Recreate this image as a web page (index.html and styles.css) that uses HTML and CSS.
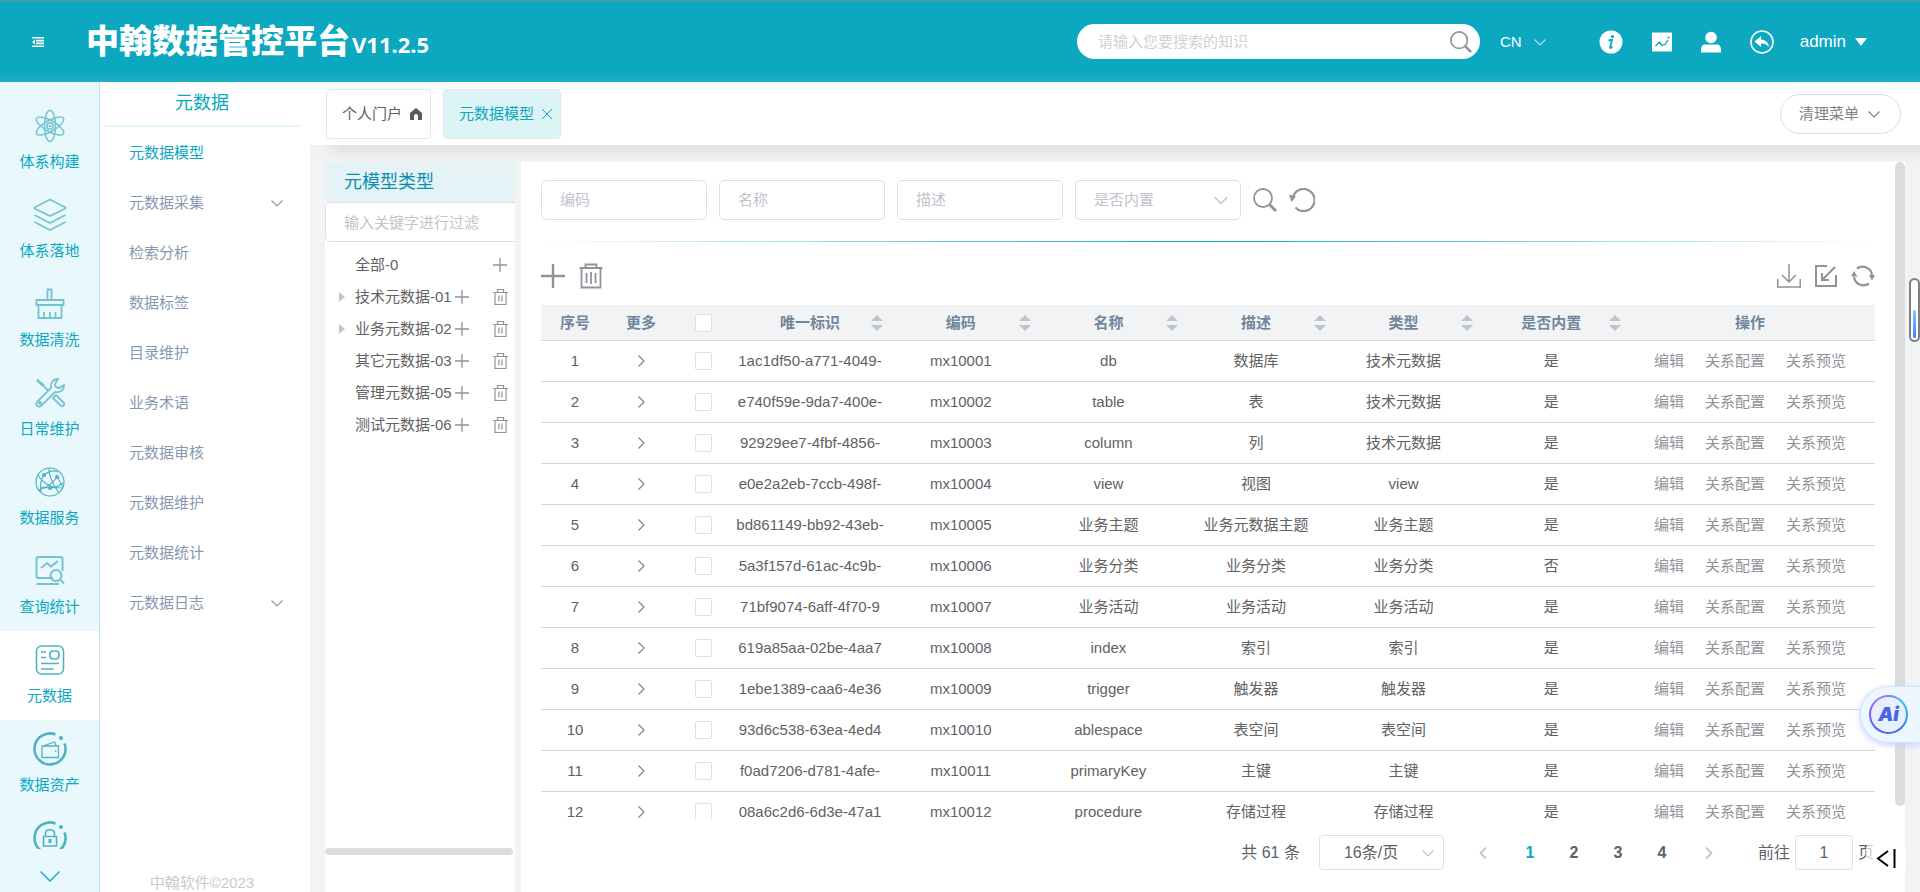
FILE: index.html
```html
<!DOCTYPE html>
<html lang="zh-CN">
<head>
<meta charset="utf-8">
<title>中翰数据管控平台</title>
<link rel="stylesheet" href="styles.css">
</head>
<body>
<svg class="sprite" aria-hidden="true">
  <symbol id="down" viewBox="0 0 12 12"><path d="M0.5 3.5 6 9l5.500-5.500" fill="none" stroke="currentColor" stroke-width="1.200"/></symbol>
  <symbol id="right" viewBox="0 0 12 12"><path d="M3.500 0.500 9 6 3.500 11.500" fill="none" stroke="currentColor" stroke-width="1.200"/></symbol>
  <symbol id="plus" viewBox="0 0 16 16"><path d="M8 1v14M1 8h14" fill="none" stroke="currentColor" stroke-width="1.300"/></symbol>
  <symbol id="trash" viewBox="0 0 24 26"><path d="M.5 5h23M6.500 5V1.500h11V5M2.500 5v19.500h19V5M7.500 10v10M12 9v12M16.500 10v10" fill="none" stroke="currentColor" stroke-width="1.800"/></symbol>
  <symbol id="trash-s" viewBox="0 0 15 16"><path d="M0 3.500h15M4.500 3V.5h6V3M2 3.500v12h11v-12M6 6.500v6M9 6.500v6" fill="none" stroke="currentColor" stroke-width="1.200"/></symbol>
  <symbol id="search" viewBox="0 0 24 24"><circle cx="10" cy="10" r="9" fill="none" stroke="currentColor" stroke-width="1.800"/><path d="m16.500 16.500 6.500 6.500" stroke="currentColor" stroke-width="2.800"/></symbol>
  <symbol id="sort" viewBox="0 0 12 16"><path d="M6 0l6 6H0zM0 10h12l-6 6z" fill="currentColor"/></symbol>
</svg>

<header class="topbar">
  <button class="icon-btn fold" aria-label="折叠菜单"><svg width="12" height="10" viewBox="0 0 12 10"><path d="M0 .75h12M4 3.600h8M4 6.400h8M0 9.250h12" stroke="#fff" stroke-width="1.700"/><path d="M0 5l3-2.500v5z" fill="#fff"/></svg></button>
  <h1 class="brand">中翰数据管控平台<span class="version">V11.2.5</span></h1>
  <form class="global-search">
    <input type="text" aria-label="搜索知识" placeholder="请输入您要搜索的知识">
    <button type="button" class="icon-btn" aria-label="搜索"><svg width="22" height="22"><use href="#search"/></svg></button>
  </form>
  <button class="lang">CN <svg width="14" height="12"><use href="#down"/></svg></button>
  <nav class="tools">
    <button class="icon-btn" aria-label="信息"><svg width="24" height="24" viewBox="0 0 24 24"><circle cx="12" cy="12" r="11.500" fill="#fff"/><circle cx="13.500" cy="6.500" r="1.600" fill="#0ba8bf"/><path d="M9.500 10.500l3.500-.8-1.800 7.500c-.3 1.300.8 1 2.300-.5" fill="none" stroke="#0ba8bf" stroke-width="1.800"/></svg></button>
    <button class="icon-btn" aria-label="图表"><svg width="20" height="20" viewBox="0 0 20 20"><path d="M0 .5h20v19H0z" fill="#fff"/><path d="M3.500 14l4-4 2.500 3.500 3-1 3-4.500" fill="none" stroke="#0ba8bf" stroke-width="1.300"/><circle cx="16.500" cy="5.500" r="1" fill="#0ba8bf"/></svg></button>
    <button class="icon-btn" aria-label="用户"><svg width="20" height="22" viewBox="0 0 20 22"><circle cx="10" cy="6.500" r="5.800" fill="#fff"/><path d="M0 21.500v-3c0-3 1.500-5 4-5h12c2.500 0 4 2 4 5v3z" fill="#fff"/></svg></button>
    <button class="icon-btn" aria-label="返回"><svg width="24" height="24" viewBox="0 0 24 24"><circle cx="12" cy="12" r="11" fill="none" stroke="#fff" stroke-width="1.600"/><path d="M4.500 11.500 11 6v3.500c5 .5 7.500 3 8 7.500-2-2.500-4.500-3.500-8-3.500V17z" fill="#fff"/></svg></button>
  </nav>
  <button class="account">admin <svg width="12" height="8" viewBox="0 0 12 8"><path d="M0 0h12L6 8z" fill="#fff"/></svg></button>
</header>

<div class="shell">
  <nav class="rail">
    <ul class="rail-list">
      <li><a href="#" class="rail-item"><svg width="34" height="34" viewBox="0 0 34 34"><g fill="none" stroke="currentColor" stroke-width="1.500"><ellipse cx="17" cy="17" rx="5.500" ry="15.500"/><ellipse cx="17" cy="17" rx="5.500" ry="15.500" transform="rotate(60 17 17)"/><ellipse cx="17" cy="17" rx="5.500" ry="15.500" transform="rotate(120 17 17)"/><circle cx="17" cy="17" r="3.200"/></g><circle cx="17" cy="17" r="1.300" fill="currentColor"/></svg>体系构建</a></li>
      <li><a href="#" class="rail-item"><svg width="34" height="34" viewBox="0 0 34 34"><path d="M17 1.500 32.500 9.500v1L17 18 1.500 10.500v-1zM1.500 17 17 25l15.500-8M1.500 24 17 32l15.500-8" fill="none" stroke="currentColor" stroke-width="1.700"/></svg>体系落地</a></li>
      <li><a href="#" class="rail-item"><svg width="34" height="34" viewBox="0 0 34 34"><path d="M14.500 13V2.500h4V13M3.500 13h27v5h-27zM5.500 18v13h23V18M11 31v-6M17 31v-6M22.500 31v-6" fill="none" stroke="currentColor" stroke-width="1.800"/></svg>数据清洗</a></li>
      <li><a href="#" class="rail-item"><svg width="34" height="34" viewBox="0 0 34 34"><g fill="none" stroke="currentColor" stroke-width="1.800"><path d="M4 26 18 12c-1-5 2-9 7-9l-3 5c0 3 2 4 4 4l5-3c0 5-4 8-9 7L8 30c-3 2-6-1-4-4z"/><path d="m20 22 8 8c2 1 4-1 3-3l-8-8z"/><circle cx="7" cy="27" r="1"/></g><path d="M3 4.500 5 3l6 5 1 2 4 4-1.500 1.500-4-4.500-2-1z" fill="currentColor"/></svg>日常维护</a></li>
      <li><a href="#" class="rail-item strong"><svg width="34" height="34" viewBox="0 0 34 34"><g fill="none" stroke="currentColor" stroke-width="1.200"><circle cx="17" cy="17" r="14"/><path d="M5 10c6 10 14 13 24 13M11 10c5-4 10-5 14-3M24 12C20 18 13 23 6 25M11 10C7 16 7 22 8 27M16 3c0 9 4 17 10 25M24 12c3 4 5 8 6 10M17 23l-9-1M17 23c5 0 9-2 13-5"/></g><circle cx="11" cy="10" r="2" fill="currentColor"/><circle cx="24" cy="12" r="2" fill="currentColor"/><circle cx="17" cy="23" r="2" fill="currentColor"/></svg>数据服务</a></li>
      <li><a href="#" class="rail-item"><svg width="34" height="34" viewBox="0 0 34 34"><g fill="none" stroke="currentColor" stroke-width="2"><path d="M20 24H5.500c-1 0-2-1-2-2V5c0-1 1-2 2-2h22c1 0 2 1 2 2v12M3.500 30H26"/><path d="m8 14 6-5 4 3.500 7-5.500"/><circle cx="23" cy="21.500" r="5.500"/><path d="m27 25.500 4 4"/></g></svg>查询统计</a></li>
      <li><a href="#" class="rail-item active"><svg width="34" height="34" viewBox="0 0 34 34"><g fill="none" stroke="currentColor" stroke-width="1.600"><rect x="3.500" y="3" width="27" height="28" rx="5"/><rect x="17" y="8" width="9" height="8" rx="3"/><path d="M8 9h5M8 14.500h5M8 20.500h18M8 26h12.500"/></g></svg>元数据</a></li>
      <li><a href="#" class="rail-item strong"><svg width="34" height="34" viewBox="0 0 34 34"><g fill="none" stroke="currentColor"><path d="M22.500 2.500A15.500 15.500 0 1 0 31.500 11.500" stroke-width="2.600"/><path d="M9 14h16.500v11.500H9zM10 14l11.500-4 1.500 3.500M22 19h1.500" stroke-width="1.300"/></g><circle cx="28" cy="6" r="2" fill="currentColor"/></svg>数据资产</a></li>
      <li><a href="#" class="rail-item strong" aria-label="数据安全"><svg width="34" height="34" viewBox="0 0 34 34"><g fill="none" stroke="currentColor"><path d="M22.500 2.500A15.500 15.500 0 1 0 31.500 11.500" stroke-width="2.600"/><path d="M10.500 15.500h13v9.500h-13zM12.500 15v-2.500c0-5 9-5 9 0V15" stroke-width="1.600"/></g><path d="M15.500 18h3v4h-3z" fill="currentColor"/><circle cx="28" cy="6" r="2" fill="currentColor"/></svg></a></li>
    </ul>
    <button class="icon-btn rail-more" aria-label="更多菜单"><svg width="20" height="11" viewBox="0 0 20 11"><path d="m.5.500 9.500 9.500 9.500-9.500" fill="none" stroke="currentColor" stroke-width="1.300"/></svg></button>
  </nav>

  <aside class="submenu">
    <h2 class="submenu-title">元数据</h2>
    <ul class="submenu-list">
      <li><a href="#" class="sub-item current">元数据模型</a></li>
      <li><a href="#" class="sub-item">元数据采集<svg width="12" height="12"><use href="#down"/></svg></a></li>
      <li><a href="#" class="sub-item">检索分析</a></li>
      <li><a href="#" class="sub-item">数据标签</a></li>
      <li><a href="#" class="sub-item">目录维护</a></li>
      <li><a href="#" class="sub-item">业务术语</a></li>
      <li><a href="#" class="sub-item">元数据审核</a></li>
      <li><a href="#" class="sub-item">元数据维护</a></li>
      <li><a href="#" class="sub-item">元数据统计</a></li>
      <li><a href="#" class="sub-item">元数据日志<svg width="12" height="12"><use href="#down"/></svg></a></li>
    </ul>
    <p class="copyright">中翰软件©2023</p>
  </aside>

  <main class="main">
    <div class="tabs">
      <button class="tab">个人门户 <svg width="12" height="12" viewBox="0 0 12 12"><path d="M6 0 12 5v7H8V8a2 2 0 0 0-4 0v4H0V5z" fill="#5a5c60"/></svg></button>
      <button class="tab selected">元数据模型 <svg width="10" height="10" viewBox="0 0 10 10"><path d="m0 0 10 10M10 0 0 10" stroke="currentColor"/></svg></button>
      <button class="clear">清理菜单 <svg width="12" height="12"><use href="#down"/></svg></button>
    </div>

    <div class="work">
      <section class="tree">
        <h3 class="tree-title">元模型类型</h3>
        <input class="tree-filter" type="text" aria-label="过滤" placeholder="输入关键字进行过滤">
        <ul class="tree-list">
          <li class="node"><span class="caret"></span>全部-0<button class="icon-btn last" aria-label="新增"><svg width="16" height="16"><use href="#plus"/></svg></button></li>
          <li class="node"><span class="caret open"></span>技术元数据-01<button class="icon-btn add" aria-label="新增"><svg width="16" height="16"><use href="#plus"/></svg></button><button class="icon-btn last" aria-label="删除"><svg width="15" height="16"><use href="#trash-s"/></svg></button></li>
          <li class="node"><span class="caret open"></span>业务元数据-02<button class="icon-btn add" aria-label="新增"><svg width="16" height="16"><use href="#plus"/></svg></button><button class="icon-btn last" aria-label="删除"><svg width="15" height="16"><use href="#trash-s"/></svg></button></li>
          <li class="node"><span class="caret"></span>其它元数据-03<button class="icon-btn add" aria-label="新增"><svg width="16" height="16"><use href="#plus"/></svg></button><button class="icon-btn last" aria-label="删除"><svg width="15" height="16"><use href="#trash-s"/></svg></button></li>
          <li class="node"><span class="caret"></span>管理元数据-05<button class="icon-btn add" aria-label="新增"><svg width="16" height="16"><use href="#plus"/></svg></button><button class="icon-btn last" aria-label="删除"><svg width="15" height="16"><use href="#trash-s"/></svg></button></li>
          <li class="node"><span class="caret"></span>测试元数据-06<button class="icon-btn add" aria-label="新增"><svg width="16" height="16"><use href="#plus"/></svg></button><button class="icon-btn last" aria-label="删除"><svg width="15" height="16"><use href="#trash-s"/></svg></button></li>
        </ul>
        <div class="tree-scroll"></div>
      </section>

      <section class="panel">
        <div class="content">
          <form class="filters">
            <input class="field" type="text" aria-label="编码" placeholder="编码">
            <input class="field" type="text" aria-label="名称" placeholder="名称">
            <input class="field" type="text" aria-label="描述" placeholder="描述">
            <div class="select-wrap"><select class="field" aria-label="是否内置"><option>是否内置</option></select><svg class="chev" width="14" height="14"><use href="#down"/></svg></div>
            <button type="button" class="icon-btn" aria-label="查询"><svg width="24" height="24"><use href="#search"/></svg></button>
            <button type="button" class="icon-btn" aria-label="重置"><svg width="26" height="24" viewBox="0 0 26 24"><path d="M4 9A11 11 0 1 1 6.500 19.500" fill="none" stroke="currentColor" stroke-width="2.200"/><path d="m0 6.500 7 2-4.500 5.500z" fill="currentColor"/></svg></button>
          </form>
          <div class="actions">
            <button class="icon-btn" aria-label="新增"><svg width="24" height="24" viewBox="0 0 24 24"><path d="M12 0v24M0 12h24" stroke="currentColor" stroke-width="2.400"/></svg></button>
            <button class="icon-btn" aria-label="删除"><svg width="24" height="26"><use href="#trash"/></svg></button>
            <span class="spacer"></span>
            <button class="icon-btn" aria-label="下载"><svg width="24" height="24" viewBox="0 0 24 24"><path d="M12 0v18M5 11l7 7 7-7M.75 15v8h22.500v-8" fill="none" stroke="currentColor" stroke-width="1.500"/></svg></button>
            <button class="icon-btn" aria-label="导入"><svg width="22" height="22" viewBox="0 0 22 22"><path d="M12 1H1v20h20V10M20 2 7.500 14.500M7 8v7h7" fill="none" stroke="currentColor" stroke-width="2"/></svg></button>
            <button class="icon-btn" aria-label="刷新"><svg width="24" height="22" viewBox="0 0 24 22"><path d="M6 3.500A9.500 9.500 0 0 1 21 10M18 18.500A9.500 9.500 0 0 1 3 12" fill="none" stroke="currentColor" stroke-width="2.200"/><path d="M3 6 6.500 11.500H0zM21 15.500l-3-5.500h6z" fill="currentColor"/></svg></button>
          </div>
          <div class="table-wrap">
            <table class="grid">
              <colgroup><col class="c-no"><col class="c-more"><col class="c-check"><col class="c-id"><col><col><col><col><col><col class="c-ops"></colgroup>
              <thead><tr>
                <th>序号</th><th>更多</th><th><input type="checkbox" aria-label="全选"></th>
                <th><div class="sortable">唯一标识<svg width="12" height="16"><use href="#sort"/></svg></div></th>
                <th><div class="sortable">编码<svg width="12" height="16"><use href="#sort"/></svg></div></th>
                <th><div class="sortable">名称<svg width="12" height="16"><use href="#sort"/></svg></div></th>
                <th><div class="sortable">描述<svg width="12" height="16"><use href="#sort"/></svg></div></th>
                <th><div class="sortable">类型<svg width="12" height="16"><use href="#sort"/></svg></div></th>
                <th><div class="sortable">是否内置<svg width="12" height="16"><use href="#sort"/></svg></div></th>
                <th>操作</th>
              </tr></thead>
              <tbody>
                <tr><td>1</td><td><svg class="more" width="12" height="12"><use href="#right"/></svg></td><td><input type="checkbox" aria-label="选择1"></td><td>1ac1df50-a771-4049-</td><td>mx10001</td><td>db</td><td>数据库</td><td>技术元数据</td><td>是</td><td><div class="ops"><a href="#">编辑</a><a href="#">关系配置</a><a href="#">关系预览</a></div></td></tr>
                <tr><td>2</td><td><svg class="more" width="12" height="12"><use href="#right"/></svg></td><td><input type="checkbox" aria-label="选择2"></td><td>e740f59e-9da7-400e-</td><td>mx10002</td><td>table</td><td>表</td><td>技术元数据</td><td>是</td><td><div class="ops"><a href="#">编辑</a><a href="#">关系配置</a><a href="#">关系预览</a></div></td></tr>
                <tr><td>3</td><td><svg class="more" width="12" height="12"><use href="#right"/></svg></td><td><input type="checkbox" aria-label="选择3"></td><td>92929ee7-4fbf-4856-</td><td>mx10003</td><td>column</td><td>列</td><td>技术元数据</td><td>是</td><td><div class="ops"><a href="#">编辑</a><a href="#">关系配置</a><a href="#">关系预览</a></div></td></tr>
                <tr><td>4</td><td><svg class="more" width="12" height="12"><use href="#right"/></svg></td><td><input type="checkbox" aria-label="选择4"></td><td>e0e2a2eb-7ccb-498f-</td><td>mx10004</td><td>view</td><td>视图</td><td>view</td><td>是</td><td><div class="ops"><a href="#">编辑</a><a href="#">关系配置</a><a href="#">关系预览</a></div></td></tr>
                <tr><td>5</td><td><svg class="more" width="12" height="12"><use href="#right"/></svg></td><td><input type="checkbox" aria-label="选择5"></td><td>bd861149-bb92-43eb-</td><td>mx10005</td><td>业务主题</td><td>业务元数据主题</td><td>业务主题</td><td>是</td><td><div class="ops"><a href="#">编辑</a><a href="#">关系配置</a><a href="#">关系预览</a></div></td></tr>
                <tr><td>6</td><td><svg class="more" width="12" height="12"><use href="#right"/></svg></td><td><input type="checkbox" aria-label="选择6"></td><td>5a3f157d-61ac-4c9b-</td><td>mx10006</td><td>业务分类</td><td>业务分类</td><td>业务分类</td><td>否</td><td><div class="ops"><a href="#">编辑</a><a href="#">关系配置</a><a href="#">关系预览</a></div></td></tr>
                <tr><td>7</td><td><svg class="more" width="12" height="12"><use href="#right"/></svg></td><td><input type="checkbox" aria-label="选择7"></td><td>71bf9074-6aff-4f70-9</td><td>mx10007</td><td>业务活动</td><td>业务活动</td><td>业务活动</td><td>是</td><td><div class="ops"><a href="#">编辑</a><a href="#">关系配置</a><a href="#">关系预览</a></div></td></tr>
                <tr><td>8</td><td><svg class="more" width="12" height="12"><use href="#right"/></svg></td><td><input type="checkbox" aria-label="选择8"></td><td>619a85aa-02be-4aa7</td><td>mx10008</td><td>index</td><td>索引</td><td>索引</td><td>是</td><td><div class="ops"><a href="#">编辑</a><a href="#">关系配置</a><a href="#">关系预览</a></div></td></tr>
                <tr><td>9</td><td><svg class="more" width="12" height="12"><use href="#right"/></svg></td><td><input type="checkbox" aria-label="选择9"></td><td>1ebe1389-caa6-4e36</td><td>mx10009</td><td>trigger</td><td>触发器</td><td>触发器</td><td>是</td><td><div class="ops"><a href="#">编辑</a><a href="#">关系配置</a><a href="#">关系预览</a></div></td></tr>
                <tr><td>10</td><td><svg class="more" width="12" height="12"><use href="#right"/></svg></td><td><input type="checkbox" aria-label="选择10"></td><td>93d6c538-63ea-4ed4</td><td>mx10010</td><td>ablespace</td><td>表空间</td><td>表空间</td><td>是</td><td><div class="ops"><a href="#">编辑</a><a href="#">关系配置</a><a href="#">关系预览</a></div></td></tr>
                <tr><td>11</td><td><svg class="more" width="12" height="12"><use href="#right"/></svg></td><td><input type="checkbox" aria-label="选择11"></td><td>f0ad7206-d781-4afe-</td><td>mx10011</td><td>primaryKey</td><td>主键</td><td>主键</td><td>是</td><td><div class="ops"><a href="#">编辑</a><a href="#">关系配置</a><a href="#">关系预览</a></div></td></tr>
                <tr><td>12</td><td><svg class="more" width="12" height="12"><use href="#right"/></svg></td><td><input type="checkbox" aria-label="选择12"></td><td>08a6c2d6-6d3e-47a1</td><td>mx10012</td><td>procedure</td><td>存储过程</td><td>存储过程</td><td>是</td><td><div class="ops"><a href="#">编辑</a><a href="#">关系配置</a><a href="#">关系预览</a></div></td></tr>
              </tbody>
            </table>
          </div>
          <div class="pager">
            <span>共 61 条</span>
            <div class="select-wrap size-wrap"><select class="size" aria-label="每页条数"><option>16条/页</option></select><svg class="chev" width="12" height="12"><use href="#down"/></svg></div>
            <button class="page arrow" aria-label="上一页"><svg width="8" height="12" viewBox="0 0 8 12"><path d="M7 .5 1.500 6 7 11.500" fill="none" stroke="currentColor" stroke-width="1.800"/></svg></button>
            <button class="page on">1</button>
            <button class="page">2</button>
            <button class="page">3</button>
            <button class="page">4</button>
            <button class="page arrow" aria-label="下一页"><svg width="8" height="12" viewBox="0 0 8 12"><path d="M1 .5 6.500 6 1 11.500" fill="none" stroke="currentColor" stroke-width="1.800"/></svg></button>
            <label class="jump">前往<input type="text" value="1">页</label>
          </div>
        </div>
        <div class="scroll-track"><div class="scroll-thumb"></div></div>
      </section>
    </div>
  </main>
</div>

<div class="gauge"><div class="gauge-fill"></div></div>
<button class="ai" aria-label="AI 助手"><span class="ai-ring"><span class="ai-text">Ai</span></span></button>
<button class="collapse" aria-label="收起"><svg width="20" height="19" viewBox="0 0 20 19"><path d="M12 2 2 9.500 12 17M18.500 0v19" fill="none" stroke="#000" stroke-width="2"/></svg></button>
</body>
</html>
```

FILE: styles.css
```css
* { box-sizing: border-box; }
body {
  margin: 0;
  height: 100vh;
  display: flex;
  flex-direction: column;
  overflow: hidden;
  position: relative;
  background: #f2f3f5;
  color: #606266;
  font: 15px/20px "Liberation Sans", "Noto Sans CJK SC", sans-serif;
}
h1, h2, h3, p, ul { margin: 0; padding: 0; font-weight: 400; }
ul { list-style: none; }
a { color: inherit; text-decoration: none; }
button, input, select { font: inherit; color: inherit; }
button { background: none; border: 0; padding: 0; cursor: pointer; }
svg { flex: none; display: block; }
.sprite { position: absolute; width: 0; height: 0; }
.icon-btn { display: flex; align-items: center; justify-content: center; color: #909399; }
input::placeholder { color: #c0c4cc; opacity: 1; }

/* top bar */
.topbar {
  flex: none;
  display: flex;
  align-items: center;
  height: 82px;
  padding: 0 53px 0 32px;
  border-top: 1px solid #6e8a92;
  background: linear-gradient(#0ba8bf 88%, #20aec3);
  color: #fff;
}
.brand {
  margin-left: 42px;
  font-size: 33px;
  line-height: 40px;
  font-weight: 900;
  font-family: "Noto Sans CJK SC", sans-serif;
  white-space: nowrap;
}
.version { margin-left: 2px; font-size: 22px; font-weight: 700; font-family: "Noto Sans", sans-serif; }
.global-search {
  display: flex;
  align-items: center;
  width: 403px;
  height: 35px;
  margin-left: auto;
  padding: 0 8px 0 21px;
  border-radius: 18px;
  background: #fff;
}
.global-search input { flex: 1; min-width: 0; border: 0; padding: 0; outline: 0; background: none; }
.global-search input::placeholder { color: #d0d2d6; }
.lang { display: flex; align-items: center; gap: 11px; margin-left: 20px; }
.lang svg { color: #a8dfe8; }
.tools { display: flex; align-items: center; gap: 29px; margin-left: 52px; }
.account { display: flex; align-items: center; gap: 9px; margin-left: 26px; font-size: 17px; }

.shell { flex: 1; min-height: 0; display: flex; }

/* icon rail */
.rail {
  flex: none;
  display: flex;
  flex-direction: column;
  width: 100px;
  padding-top: 15px;
  background: #e8f8fc;
  border-right: 1px solid #c3e8ee;
}
.rail-list { flex: 1; min-height: 0; overflow: hidden; }
.rail-item {
  display: flex;
  flex-direction: column;
  align-items: center;
  gap: 9px;
  height: 89px;
  padding: 12px 0;
  color: #0ba8bf;
}
.rail-item svg { color: #74c3cf; }
.rail-item.strong svg, .rail-item.active svg { color: #4fb3c1; }
.rail-item.active { background: #fff; }
.rail-more { height: 43px; padding-top: 12px; color: #0ba8bf; }

/* sub menu */
.submenu { flex: none; display: flex; flex-direction: column; width: 210px; padding: 0 10px 0 4px; background: #fff; }
.submenu-title {
  height: 45px;
  border-bottom: 2px solid #e4f7fa;
  color: #0ba8bf;
  font-size: 18px;
  line-height: 42px;
  text-align: center;
}
.submenu-list { flex: 1; min-height: 0; }
.sub-item {
  display: flex;
  align-items: center;
  justify-content: space-between;
  height: 50px;
  padding: 1px 17px 0 25px;
  color: #8799b0;
}
.sub-item.current { color: #0ba8bf; }
.copyright { height: 19px; color: #c8cacd; text-align: center; }

/* main */
.main { flex: 1; min-width: 0; display: flex; flex-direction: column; }
.tabs { flex: none; display: flex; align-items: center; gap: 12px; height: 63px; padding: 0 19px 0 16px; background: #fff; }
.tab {
  display: flex;
  align-items: center;
  gap: 8px;
  height: 50px;
  padding: 0 8px 0 15px;
  border: 1px solid #e4e7ec;
  border-radius: 4px;
}
.tab.selected { background: #dcf4f6; color: #0ba8bf; }
.clear {
  display: flex;
  align-items: center;
  gap: 9px;
  height: 40px;
  margin-left: auto;
  padding: 0 20px 0 18px;
  border: 1px solid #dcdfe6;
  border-radius: 20px;
  color: #808286;
}
.work {
  flex: 1;
  min-height: 0;
  display: flex;
  gap: 6px;
  padding: 17px 15px 0;
  background: linear-gradient(90deg, #f2f3f5 8px, rgba(242, 243, 245, 0) 32px), linear-gradient(#dfe0e0, #f2f3f5 17px);
}

/* type tree */
.tree { flex: none; display: flex; flex-direction: column; width: 190px; overflow: hidden; background: #fff; }
.tree-title { height: 40px; padding-left: 19px; background: #e5f2f6; color: #0b8fb0; font-size: 18px; line-height: 40px; }
.tree-filter { flex: none; width: 220px; height: 40px; padding: 0 18px; border: 1px solid #dcdfe6; border-radius: 5px; }
.tree-list { flex: 1; min-height: 0; display: grid; grid-auto-rows: 32px; align-content: start; padding: 7px 7px 0 14px; }
.node { display: flex; align-items: center; white-space: nowrap; }
.node .add { margin-left: 2px; }
.node .last { margin-left: auto; }
.caret { width: 6px; margin-right: 10px; }
.caret.open { border-left: 6px solid #c0c4cc; border-top: 5px solid transparent; border-bottom: 5px solid transparent; }
.tree-scroll { flex: none; height: 7px; margin: 0 2px 37px 0; border-radius: 4px; background: #dcdcdc; }

/* content panel */
.panel { flex: 1; min-width: 0; display: flex; background: #fff; }
.content { flex: 1; min-width: 0; display: flex; flex-direction: column; padding: 18px 20px 0; }
.filters { flex: none; display: flex; align-items: center; gap: 12px; height: 62px; padding-bottom: 22px; border-bottom: 1px solid; border-image: linear-gradient(90deg, #fff, #0ba8bf, #fff) 1; }
.field { width: 166px; height: 40px; padding: 0 18px; border: 1px solid #dcdfe6; border-radius: 5px; background: #fff; }
.select-wrap { position: relative; }
.select-wrap select { appearance: none; }
select.field { color: #c0c4cc; }
.chev { position: absolute; right: 13px; top: 13px; color: #c0c4cc; pointer-events: none; }
.actions { flex: none; display: flex; align-items: center; gap: 14px; height: 63px; padding-top: 4px; }
.actions .spacer { flex: 1; }

.table-wrap { flex: 1; min-height: 0; overflow: hidden; }
.grid { width: 100%; border-collapse: separate; border-spacing: 0; table-layout: fixed; }
.c-no { width: 68px; }
.c-more { width: 64px; }
.c-check { width: 60px; }
.c-id { width: 154px; }
.c-ops { width: 250px; }
.grid th { height: 36px; padding: 0; background: #f2f3f5; border-bottom: 1px solid #d4d5d9; color: #71869d; font-weight: 700; }
.grid td { height: 41px; padding: 0; border-bottom: 1px solid #d4d5d9; text-align: center; white-space: nowrap; }
.sortable { display: grid; grid-template-columns: 1fr auto 1fr; }
.sortable::before { content: ""; }
.sortable svg { justify-self: end; align-self: center; margin-right: 4px; color: #c0c4cc; }
.more { margin: 0 auto; color: #808286; }
.grid input { appearance: none; display: block; width: 17px; height: 18px; margin: 0 auto; border: 1px solid #dcdfe6; border-radius: 2px; background: #fff; }
.ops { display: flex; justify-content: center; gap: 21px; color: #909399; }

/* pagination */
.pager { flex: none; display: flex; align-items: center; justify-content: flex-end; height: 73px; padding: 0 1px 6px 0; font-size: 16px; }
.size-wrap { margin: 0 14px 0 19px; }
.size { width: 125px; height: 35px; padding: 0 24px; border: 1px solid #dcdfe6; border-radius: 4px; background: #fff; }
.size-wrap .chev { right: 10px; top: 12px; }
.page { display: flex; align-items: center; justify-content: center; width: 44px; font-weight: 700; }
.page.on { color: #0ba8bf; }
.page.arrow { color: #c0c4cc; width: 50px; }
.jump { display: flex; align-items: center; gap: 5px; margin-left: 24px; }
.jump input { width: 58px; height: 35px; padding: 0; border: 1px solid #dcdfe6; border-radius: 4px; text-align: center; }
.scroll-track { flex: none; width: 10px; padding-bottom: 86px; }
.scroll-thumb { height: 100%; border-radius: 5px; background: #dcdcdc; }

/* floating widgets */
.gauge { position: absolute; right: 0; top: 278px; display: flex; align-items: flex-end; width: 11px; height: 64px; padding: 2px; border: 2px solid #7d7f83; border-radius: 6px; background: #fff; }
.gauge-fill { width: 100%; height: 28px; border-radius: 2px; background: linear-gradient(#7cc8ff, #3d82ff); }
.ai {
  position: absolute;
  right: 0;
  bottom: 149px;
  width: 60px;
  height: 57px;
  padding-left: 8px;
  border: 1px solid #cfe4fb;
  border-right: 0;
  border-radius: 28px 0 0 28px;
  background: #eef6ff;
  box-shadow: 0 2px 6px #c5d2ff;
}
.ai-ring {
  display: flex;
  align-items: center;
  justify-content: center;
  width: 39px;
  height: 39px;
  border: 2px solid transparent;
  border-radius: 50%;
  background: linear-gradient(#e9effd, #e9effd) padding-box, conic-gradient(#8a7cf0, #2cc8f0 15%, #3f7cf0 35%, #4a62f0 55%, #7a5cf5 75%, #a080f5 90%, #8a7cf0) border-box;
}
.ai-text { color: #4a62e8; font: italic 900 19px/20px Inter, sans-serif; }
.collapse { position: absolute; right: 14px; bottom: 14px; display: flex; align-items: center; justify-content: center; width: 40px; height: 40px; border-radius: 12px; background: rgba(255, 255, 255, 0.7); }
```
